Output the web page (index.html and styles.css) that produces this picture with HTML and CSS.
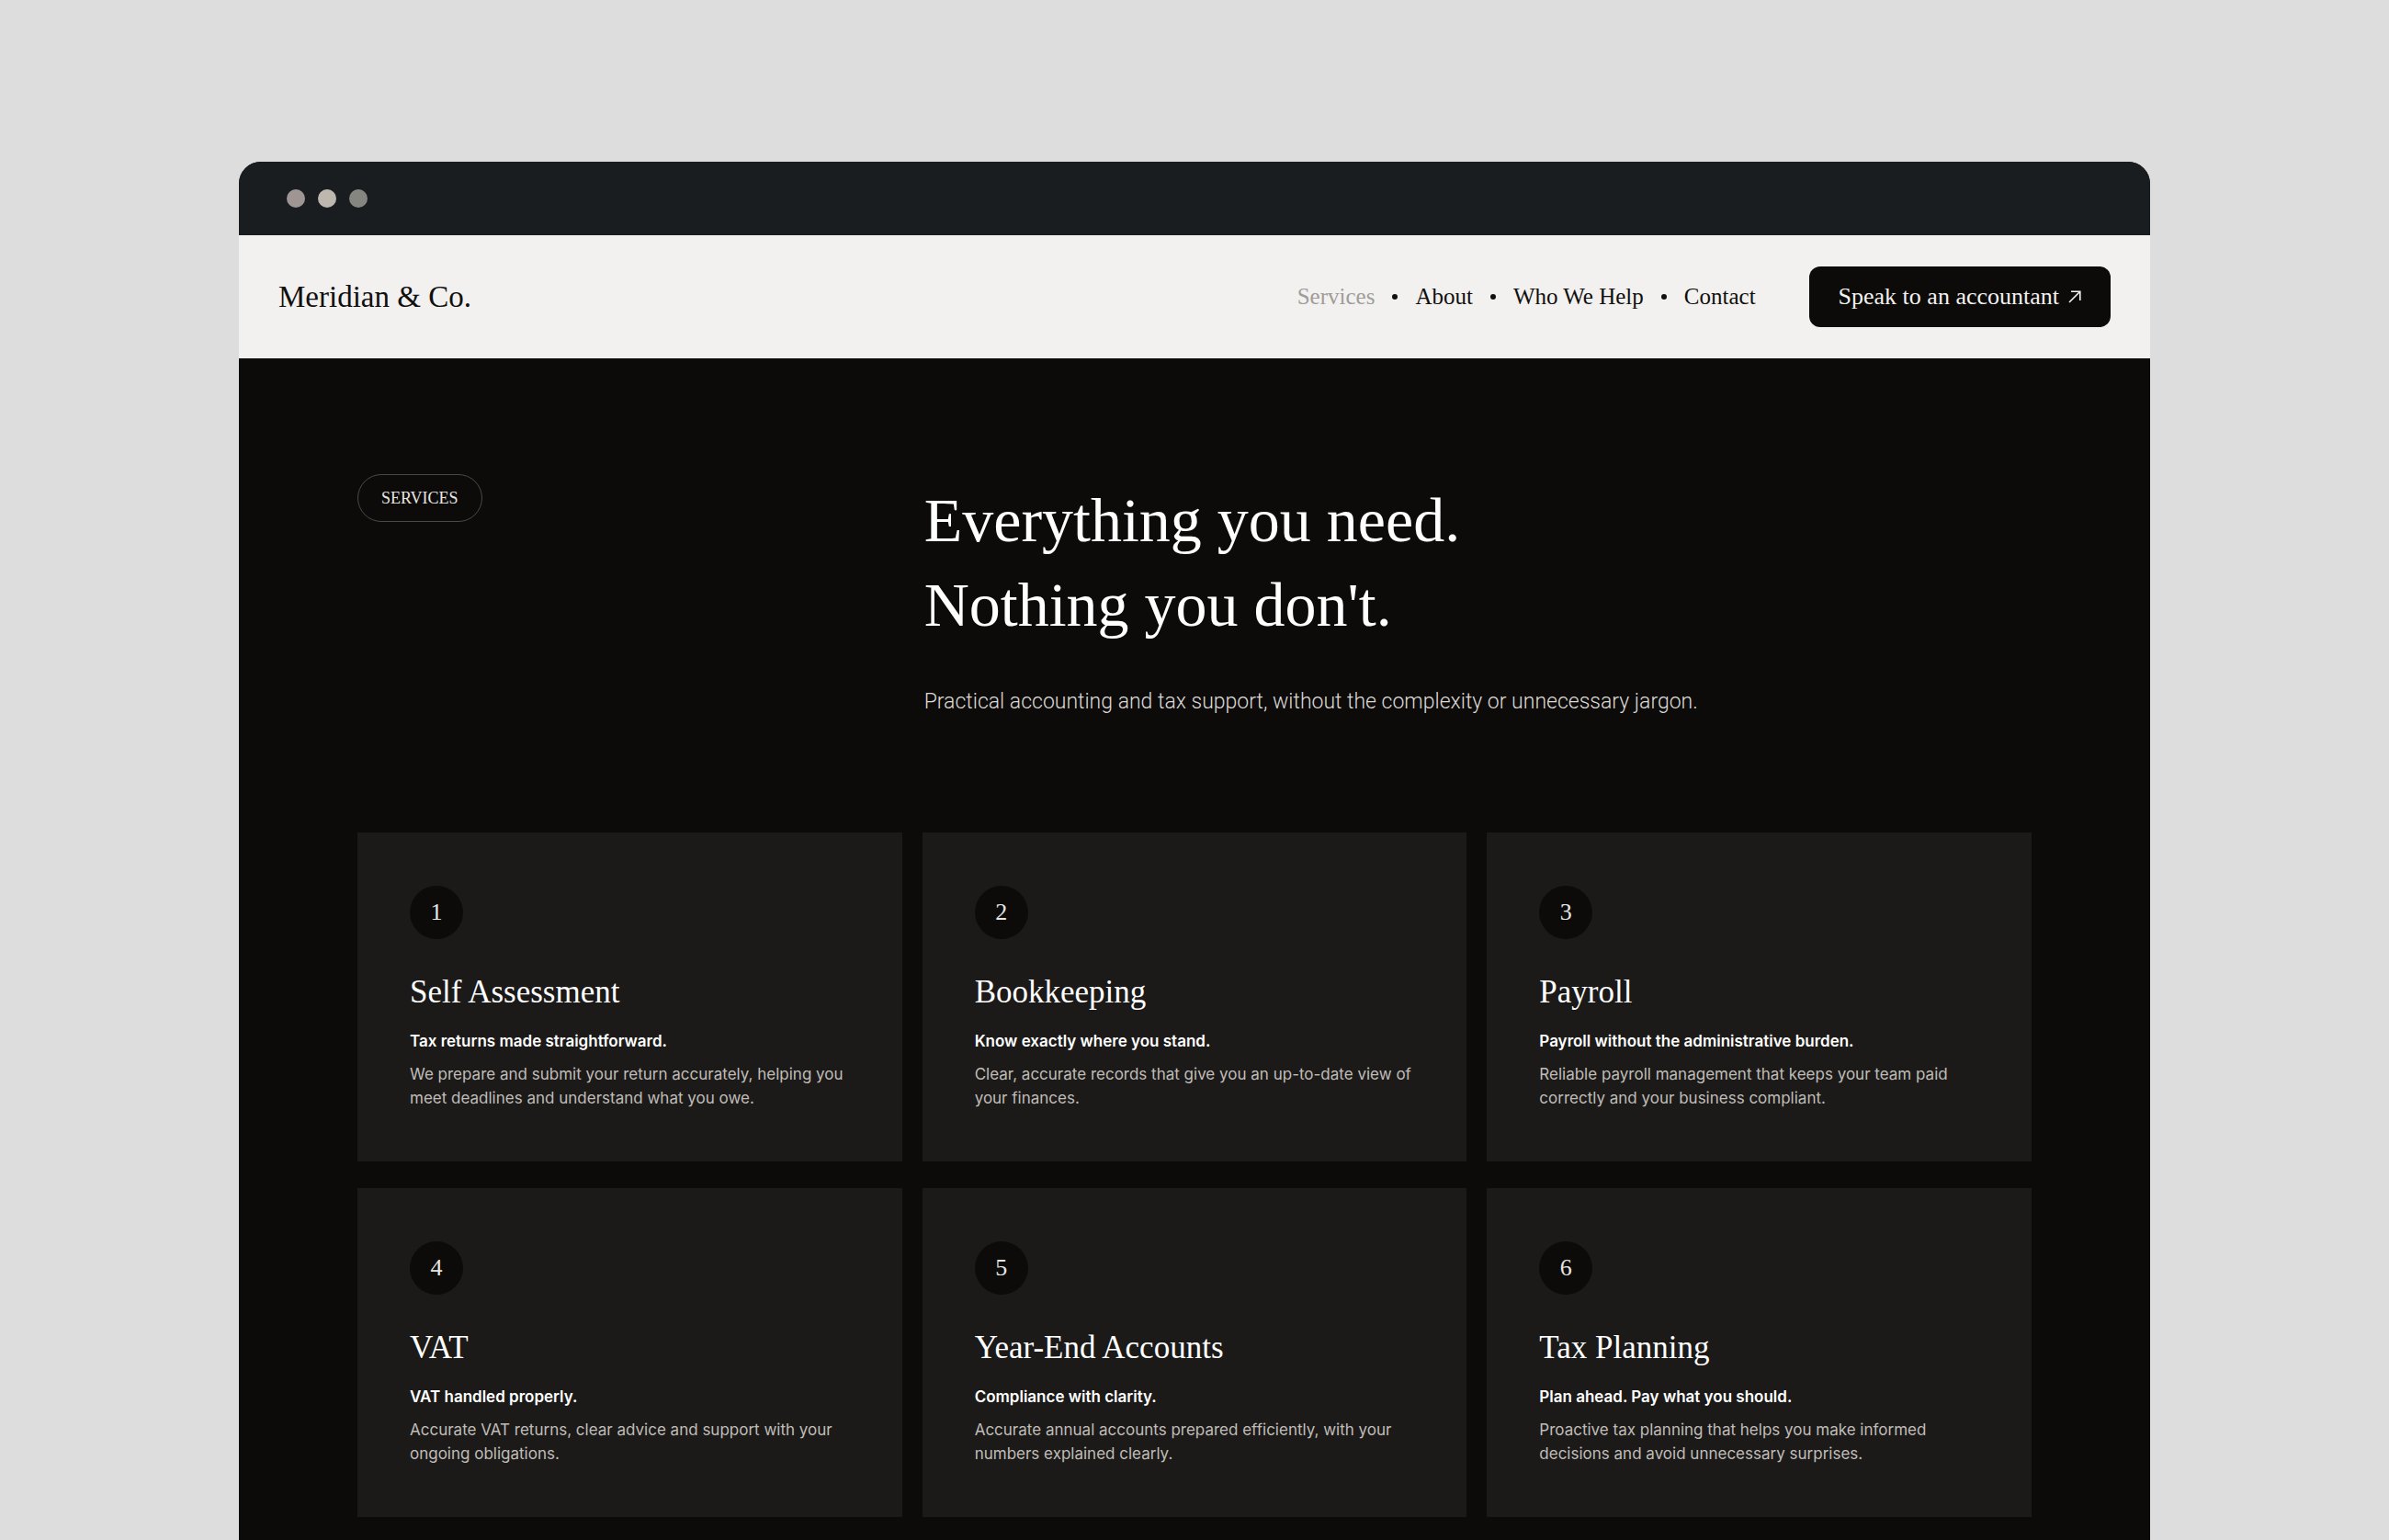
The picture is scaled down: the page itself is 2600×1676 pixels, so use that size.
FILE: index.html
```html
<!DOCTYPE html>
<html lang="en">
<head>
    <meta charset="UTF-8">
    <meta name="viewport" content="width=device-width, initial-scale=1.0">
    <title>Meridian &amp; Co. | Services</title>
    <link rel="stylesheet" href="styles.css">
</head>
<body>

    <div class="browser">
        <div class="title-bar">
            <span class="dot dot-close"></span>
            <span class="dot dot-minimise"></span>
            <span class="dot dot-expand"></span>
        </div>

        <header class="header">
            <a class="logo" href="#">Meridian &amp; Co.</a>
            <nav class="nav">
                <a class="active" href="#services">Services</a>
                <span class="separator"></span>
                <a href="#about">About</a>
                <span class="separator"></span>
                <a href="#who">Who We Help</a>
                <span class="separator"></span>
                <a href="#contact">Contact</a>
            </nav>
            <button class="cta">
                Speak to an accountant
                <svg width="14" height="14" viewBox="0 0 14 14" fill="none" stroke="currentColor" stroke-width="1.6" aria-hidden="true">
                    <path d="M1 13L12.5 1.5M3 1.2H12.8V11"/>
                </svg>
            </button>
        </header>

        <main class="services" id="services">
            <div class="intro">
                <div>
                    <span class="tag">SERVICES</span>
                </div>
                <div class="intro-text">
                    <h1>Everything you need.<br>Nothing you don't.</h1>
                    <p>Practical accounting and tax support, without the complexity or unnecessary jargon.</p>
                </div>
            </div>

            <div class="cards">
                <article class="card">
                    <span class="number">1</span>
                    <h2>Self Assessment</h2>
                    <h3>Tax returns made straightforward.</h3>
                    <p>We prepare and submit your return accurately, helping you meet deadlines and understand what you owe.</p>
                </article>
                <article class="card">
                    <span class="number">2</span>
                    <h2>Bookkeeping</h2>
                    <h3>Know exactly where you stand.</h3>
                    <p>Clear, accurate records that give you an up-to-date view of your finances.</p>
                </article>
                <article class="card">
                    <span class="number">3</span>
                    <h2>Payroll</h2>
                    <h3>Payroll without the administrative burden.</h3>
                    <p>Reliable payroll management that keeps your team paid correctly and your business compliant.</p>
                </article>
                <article class="card">
                    <span class="number">4</span>
                    <h2>VAT</h2>
                    <h3>VAT handled properly.</h3>
                    <p>Accurate VAT returns, clear advice and support with your ongoing obligations.</p>
                </article>
                <article class="card">
                    <span class="number">5</span>
                    <h2>Year-End Accounts</h2>
                    <h3>Compliance with clarity.</h3>
                    <p>Accurate annual accounts prepared efficiently, with your numbers explained clearly.</p>
                </article>
                <article class="card">
                    <span class="number">6</span>
                    <h2>Tax Planning</h2>
                    <h3>Plan ahead. Pay what you should.</h3>
                    <p>Proactive tax planning that helps you make informed decisions and avoid unnecessary surprises.</p>
                </article>
            </div>
        </main>
    </div>

</body>
</html>
```

FILE: styles.css
```css
* {
    box-sizing: border-box;
}

body {
    display: flex;
    min-height: 100vh;
    margin: 0;
    padding: 176px 10% 0;
    background-color: #dddddd;
    font-family: Inter, sans-serif;
}

h1, h2, h3, p {
    margin: 0;
    font-weight: 400;
}

a {
    color: inherit;
    text-decoration: none;
}

.browser {
    flex: 1;
    display: flex;
    flex-direction: column;
    border-radius: 24px 24px 0 0;
    overflow: hidden;
    background-color: #0c0b09;
}

.title-bar {
    display: flex;
    align-items: center;
    gap: 14px;
    height: 80px;
    padding: 0 52px;
    background-color: #191d20;
}

.dot {
    width: 20px;
    height: 20px;
    border-radius: 50%;
}

.dot-close {
    background-color: #9f9593;
}

.dot-minimise {
    background-color: #bdb7b0;
}

.dot-expand {
    background-color: #84867f;
}

/* Header */
.header {
    display: flex;
    align-items: center;
    padding: 34px 43px;
    background-color: #f3f1ef;
    color: #11100f;
    font-family: "Liberation Serif", serif;
}

.logo {
    font-size: 33px;
}

.nav {
    display: flex;
    align-items: center;
    gap: 19px;
    margin-left: auto;
    margin-right: 58px;
    font-size: 25px;
}

.nav .active {
    color: #a09c99;
}

.separator {
    width: 6px;
    height: 6px;
    border-radius: 50%;
    background-color: #11100f;
}

.cta {
    display: flex;
    align-items: center;
    gap: 10px;
    height: 66px;
    padding: 0 32px;
    border: none;
    border-radius: 12px;
    background-color: #0c0b09;
    color: #f3f1ef;
    font-family: inherit;
    font-size: 26px;
    cursor: pointer;
}

/* Services section */
.services {
    padding: 126px 129px 24px;
    color: #ffffff;
}

.intro {
    display: grid;
    grid-template-columns: 1fr 2fr;
    gap: 14px;
    margin-bottom: 124px;
}

.tag {
    display: inline-block;
    padding: 0 25px;
    border: 1px solid #4a4947;
    border-radius: 26px;
    color: #e8e6e3;
    font-family: "Liberation Serif", serif;
    font-size: 18px;
    line-height: 50px;
}

.intro-text {
    padding-top: 4px;
}

.intro h1 {
    font-family: "Liberation Serif", serif;
    font-size: 68px;
    line-height: 92px;
}

.intro p {
    margin-top: 42px;
    color: #dcd9d6;
    font-family: Roboto, sans-serif;
    font-size: 23px;
    font-weight: 300;
    line-height: 36px;
}

.cards {
    display: grid;
    grid-template-columns: repeat(3, 1fr);
    gap: 29px 22px;
}

.card {
    padding: 58px 57px 56px;
    background-color: #1b1a18;
}

.number {
    display: flex;
    align-items: center;
    justify-content: center;
    width: 58px;
    height: 58px;
    border-radius: 50%;
    background-color: #0c0b09;
    color: #e8e6e3;
    font-family: "Liberation Serif", serif;
    font-size: 26px;
}

.card h2 {
    margin-top: 36px;
    font-family: "Liberation Serif", serif;
    font-size: 35px;
    line-height: 44px;
}

.card h3 {
    margin-top: 18px;
    font-size: 17px;
    font-weight: 600;
    line-height: 26px;
}

.card p {
    margin-top: 10px;
    color: #c0bdb9;
    font-size: 17px;
    line-height: 26px;
}
```
